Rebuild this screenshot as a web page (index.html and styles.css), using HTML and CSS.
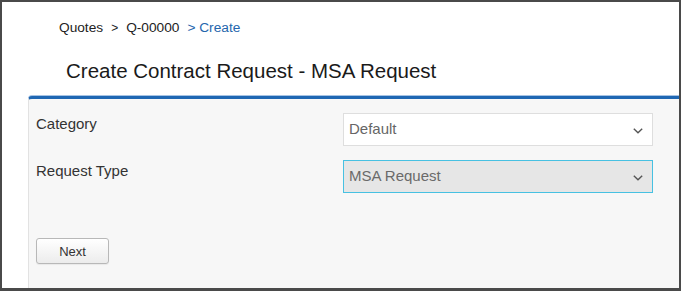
FILE: index.html
```html
<!DOCTYPE html>
<html lang="en">
<head>
<meta charset="utf-8">
<title>Create Contract Request - MSA Request</title>
<link rel="stylesheet" href="styles.css">
</head>
<body>
<div class="frame">
  <nav class="breadcrumb">
    <span class="crumb">Quotes</span>
    <span class="sep">&gt;</span>
    <span class="crumb">Q-00000</span>
    <span class="current">&gt; Create</span>
  </nav>
  <h1 class="title">Create Contract Request - MSA Request</h1>
  <section class="panel">
    <div class="form">
      <label class="label" for="cat">Category</label>
      <div class="select-wrap">
        <select id="cat" class="select"><option>Default</option></select>
        <svg class="chev" width="10" height="6" viewBox="0 0 10 6"><path d="M0.8 0.8 L5 4.8 L9.2 0.8" fill="none" stroke="#555" stroke-width="1.4"/></svg>
      </div>
      <label class="label" for="rt">Request Type</label>
      <div class="select-wrap">
        <select id="rt" class="select select-active"><option>MSA Request</option></select>
        <svg class="chev" width="10" height="6" viewBox="0 0 10 6"><path d="M0.8 0.8 L5 4.8 L9.2 0.8" fill="none" stroke="#555" stroke-width="1.4"/></svg>
      </div>
    </div>
    <div class="actions">
      <button class="btn" type="button">Next</button>
    </div>
  </section>
</div>
</body>
</html>
```

FILE: styles.css
```css
* { box-sizing: border-box; }
html, body { margin: 0; padding: 0; background: #fff; }
body { font-family: "Liberation Sans", Arial, sans-serif; }

.frame {
  width: 681px;
  height: 291px;
  border: 2px solid #4a4a4a;
  border-bottom-width: 3px;
  display: flex;
  flex-direction: column;
  background: #fff;
  overflow: hidden;
}

.breadcrumb {
  padding: 16px 0 0 57px;
  font-size: 13.7px;
  line-height: 20px;
  color: #222;
  display: flex;
}
.breadcrumb .sep { margin: 0 8px; font-size: 12px; }
.breadcrumb .current { color: #2566ad; margin-left: 8px; }

.title {
  margin: 19px 0 11px 64px;
  font-size: 20.5px;
  line-height: 28px;
  font-weight: normal;
  color: #1a1a1a;
}

.panel {
  flex: 1;
  margin-left: 26px;
  background: #f7f7f7;
  border-top: 3px solid #1f67b3;
  border-left: 1px solid #e2e2e2;
  border-top-left-radius: 4px;
  box-shadow: 0 -1px 0 #a6c3e4;
  padding: 14px 26px 0 7px;
}

.form {
  display: grid;
  grid-template-columns: 307px 310px;
  row-gap: 14px;
}

.label {
  font-size: 15px;
  line-height: 20px;
  color: #333;
  margin-top: 1px;
}

.select-wrap { position: relative; width: 310px; height: 33px; }
.select {
  appearance: none;
  -webkit-appearance: none;
  width: 100%;
  height: 100%;
  margin: 0;
  padding: 0 24px 3px 5px;
  border: 1px solid #dedede;
  border-radius: 0;
  background: #fff;
  font-family: "Liberation Sans", Arial, sans-serif;
  font-size: 15px;
  color: #666;
  outline: none;
}
.select-active {
  background: #e6e6e6;
  border: 1px solid #47c1e2;
  color: #6a6a6a;
}
.chev { position: absolute; right: 10px; top: 15px; pointer-events: none; }

.actions { padding-top: 45px; }
.btn {
  width: 73px;
  height: 26px;
  border: 1px solid #b8b8b8;
  border-radius: 3px;
  background: linear-gradient(#ffffff, #ececec);
  font-family: "Liberation Sans", Arial, sans-serif;
  font-size: 13px;
  color: #333;
  padding: 0;
  box-shadow: 0 1px 1px rgba(0,0,0,0.06);
}
```
